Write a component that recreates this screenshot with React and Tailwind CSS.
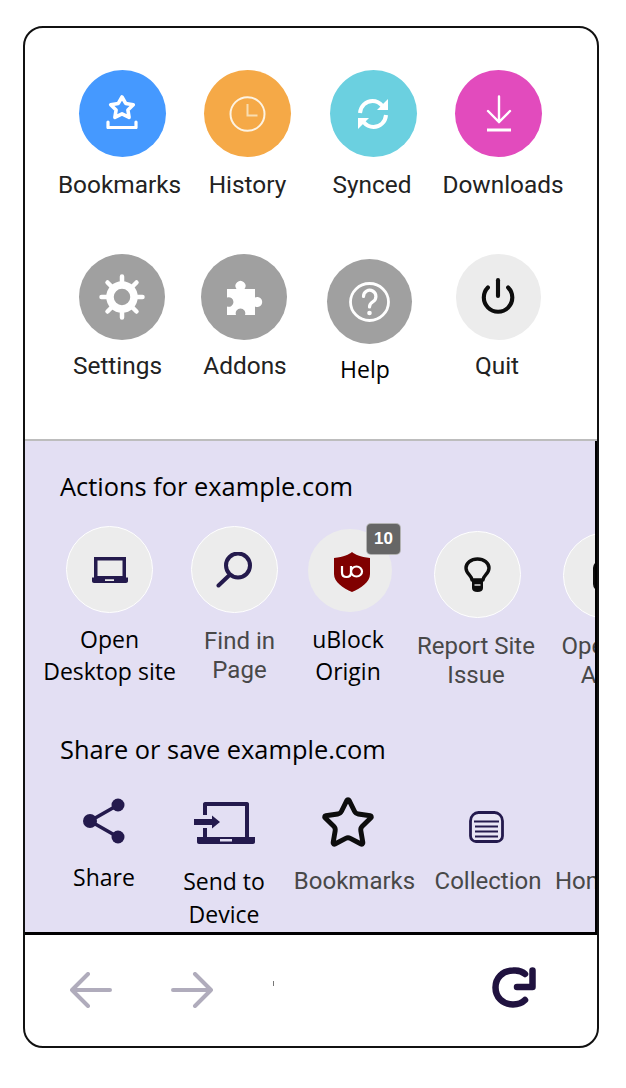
import { Power, Star } from "lucide-react";

const roboto = "font-['Roboto',sans-serif]";
const openSans = "font-['Open_Sans',sans-serif]";

function Circle({ className, children }) {
  return <div className={`flex shrink-0 items-center justify-center rounded-full ${className}`}>{children}</div>;
}

function Item({ width, circle, top = "", label, labelClass, children }) {
  return (
    <div className={`flex shrink-0 flex-col items-center ${width}`}>
      <Circle className={`${circle} ${top}`}>{children}</Circle>
      <div className={`whitespace-pre text-center ${labelClass}`}>{label}</div>
    </div>
  );
}

function BookmarksIcon() {
  return (
    <svg className="mb-[5px]" width="32" height="35" viewBox="0 0 32 35" fill="none" stroke="white" strokeLinejoin="round" strokeLinecap="round">
      <path d="M16 3l3.700 6.400 7.600 1.300-5.400 5.300 1.200 7.400-7.100-3.500-7.100 3.500 1.200-7.400-5.400-5.300 7.600-1.300z" strokeWidth="3.600" />
      <path d="M2 28v5.500h28V28" strokeWidth="3.200" />
    </svg>
  );
}

function ClockIcon() {
  return (
    <svg width="37" height="36" viewBox="0 0 37 36" fill="none" strokeWidth="2">
      <ellipse cx="18.500" cy="18" rx="17" ry="16.800" stroke="#FDF3E2" />
      <path d="M18.500 8v11.500h10" stroke="#F9DDB0" />
    </svg>
  );
}

function SyncIcon() {
  return (
    <svg width="32" height="32" viewBox="0 0 32 32" fill="none" stroke="white" strokeWidth="4">
      <path d="M3 15C3.500 8 9 3 15.500 3c4.500 0 7.500 2 10 5" />
      <path d="M29 17c-.5 7-6 12-12.500 12-4.500 0-7.500-2-10-5" />
      <path d="M31 1v11H20z" fill="white" stroke="none" />
      <path d="M1 31V20h11z" fill="white" stroke="none" />
    </svg>
  );
}

function DownloadIcon() {
  return (
    <svg width="26" height="37" viewBox="0 0 26 37" fill="none" stroke="white" strokeWidth="2.400" strokeLinecap="round">
      <path d="M13 1.500V27M2 16l11 11 11-11" />
      <path d="M1 35h24" strokeWidth="3" strokeLinecap="butt" />
    </svg>
  );
}

function GearIcon() {
  return (
    <svg width="46" height="46" viewBox="0 0 46 46" fill="none" stroke="white" strokeLinecap="round">
      <circle cx="23" cy="23" r="12" strokeWidth="7.500" />
      <path d="M23 2.500V9M23 37v6.500M2.500 23H9M37 23h6.500M8.500 8.500l4 4M33.500 33.500l4 4M37.500 8.500l-4 4M12.500 33.500l-4 4" strokeWidth="4.500" />
    </svg>
  );
}

function PuzzleIcon() {
  return (
    <svg className="ml-[3px]" width="36" height="37" viewBox="0 0 36 37" fill="white">
      <path d="M0 10H9.500A5 5 0 1 1 17.500 10H28V18.500A5 5 0 1 1 28 27.500V36H18A4.800 4.800 0 1 0 9 36H0V27.500A4.800 4.800 0 1 0 0 18.500Z" />
    </svg>
  );
}

function HelpIcon() {
  return (
    <svg width="41" height="40" viewBox="0 0 41 40" fill="none" stroke="white" strokeLinecap="round">
      <ellipse cx="20.500" cy="20" rx="19" ry="18.500" strokeWidth="2.800" />
      <path d="M14.500 14.500a6.200 6.200 0 1 1 9.500 5.200c-2.500 1.600-3.500 2.600-3.500 5.300" strokeWidth="3.200" />
      <circle cx="20.500" cy="31" r="2.300" fill="white" stroke="none" />
    </svg>
  );
}

function LaptopIcon() {
  return (
    <svg width="36" height="26" viewBox="0 0 36 26" fill="#241A4D">
      <path fillRule="evenodd" d="M2 0h32v21H2zM5.500 3.500V19h25V3.500z" />
      <path fillRule="evenodd" d="M0 20.500h36V24c0 1.200-.8 2-2 2H2c-1.200 0-2-.8-2-2zM13 22.200V24h9v-1.800z" />
    </svg>
  );
}

function SearchIcon() {
  return (
    <svg width="37" height="36" viewBox="0 0 37 36" fill="none" stroke="#241A4D" strokeLinecap="round">
      <circle cx="22" cy="13.500" r="12" strokeWidth="4" />
      <path d="M12.500 24L2.500 33.500" strokeWidth="4" />
    </svg>
  );
}

function ShieldIcon() {
  return (
    <svg className="ml-[4px] mt-[3px]" width="36" height="40" viewBox="0 0 36 40" fill="none">
      <path d="M18 0c3 2.500 8 5 18 6v16C36 30 27 36 18 40 9 36 0 30 0 22V6c10-1 15-3.500 18-6z" fill="#800000" />
      <path d="M8 14v6.500c0 3 1.800 4.500 4.500 4.500s4.500-1.500 4.500-4.500V14" stroke="white" strokeWidth="2.200" />
      <ellipse cx="22.500" cy="19.500" rx="5.500" ry="5" stroke="white" strokeWidth="2.200" />
    </svg>
  );
}

function BulbIcon() {
  return (
    <svg width="27" height="35" viewBox="0 0 27 35" fill="none" stroke="#0D0D0D">
      <path d="M8 23c0-4.500-6-6-6-12C2 6 7 2 13.500 2S25 6 25 11c0 6-6 7.500-6 12z" strokeWidth="3.400" strokeLinejoin="round" />
      <path d="M8 23h11v8c0 2.500-2 4-5.500 4S8 33.500 8 31z" fill="#0D0D0D" stroke="none" />
      <path d="M10.500 28h6" stroke="#ECECEC" strokeWidth="1.400" />
    </svg>
  );
}

function ShareIcon() {
  return (
    <svg width="42" height="46" viewBox="0 0 42 46" fill="#241A4D" stroke="#241A4D">
      <path d="M35 7L7 23l28 16" fill="none" strokeWidth="3.600" />
      <circle cx="35" cy="7" r="6.500" stroke="none" />
      <circle cx="7" cy="23" r="7" stroke="none" />
      <circle cx="35" cy="39" r="6.500" stroke="none" />
    </svg>
  );
}

function SendIcon() {
  return (
    <svg width="61" height="42" viewBox="0 0 61 42" fill="#241A4D">
      <path d="M11 0h42c1.500 0 2 1 2 2v34h-4V4H13v9H9V2c0-1 .8-2 2-2zM9 26h4v10H9z" />
      <path d="M3 35h58v5c0 1.200-.8 2-2 2H5c-1.200 0-2-.8-2-2zM26 37v2.400h12V37z" fillRule="evenodd" />
      <path d="M0 17h18v-3.500l8 6.500-8 6.500V23H0z" />
    </svg>
  );
}

function CollectionIcon() {
  return (
    <svg width="35" height="32" viewBox="0 0 35 32" fill="none" stroke="#241A4D">
      <path d="M1.500 10c0-5 4-8.500 8-8.500h16c4 0 8 3.500 8 8.500v15c0 3-2.500 5.500-5.500 5.500H7c-3 0-5.500-2.500-5.500-5.500z" strokeWidth="2.800" fill="#E8E5F4" />
      <path d="M5 10.500h25M6 15.500h23M6 20.500h23M6 25.500h23" strokeWidth="2" />
    </svg>
  );
}

function ReloadIcon() {
  return (
    <svg width="44" height="41" viewBox="0 0 44 41" fill="none" stroke="#20123F" strokeWidth="6.500" strokeLinecap="round">
      <path d="M33 7C30 4 26 3 21 3.500 10.500 3.500 3.500 11 3.500 20.500S10.500 37.500 21 37.500c5 0 9-1.500 12-4.500" />
      <path d="M40.500 3.500V20H25" strokeLinejoin="round" />
    </svg>
  );
}

function BackIcon() {
  return (
    <svg width="42" height="36" viewBox="0 0 42 36" fill="none" stroke="#B0ACBC" strokeWidth="4" strokeLinecap="round" strokeLinejoin="round">
      <path d="M40 18H2M18 2L2 18l16 16" />
    </svg>
  );
}

function ForwardIcon() {
  return (
    <svg width="42" height="36" viewBox="0 0 42 36" fill="none" stroke="#B0ACBC" strokeWidth="4" strokeLinecap="round" strokeLinejoin="round">
      <path d="M2 18h38M24 2l16 16-16 16" />
    </svg>
  );
}

export default function App() {
  const gray = "h-[86px] w-[86px] bg-[#A0A0A0]";
  const light = "h-[87px] w-[87px] bg-[#ECECEC] border border-white";
  const topText = `text-[24.400px] leading-[28px] text-[#222] ${roboto}`;
  const openText = `text-[23px] leading-[32px] text-black ${openSans}`;
  const grayText = `text-[24px] leading-[29px] text-[#484848] ${roboto}`;
  const bottomText = `text-[24px] leading-[28px] text-[#484848] ${roboto}`;
  const heading = `pl-[18px] text-[25.400px] leading-[32px] text-black ${openSans}`;

  return (
    <div className="h-[1088px] w-[626px] bg-white pl-[23px] pt-[26px]">
      <div className="flex h-[1022px] w-[576px] flex-col overflow-hidden rounded-[20px] border-2 border-[#111]">
        <div className="h-[413px] shrink-0 border-b-2 border-[#BDBDBD] pl-[34px] pt-[42px]">
          <div className="flex">
            <Item width="w-[126px]" circle="h-[87px] w-[87px] bg-[#4599FF]" label="Bookmarks" labelClass={`mr-[5px] mt-[14px] ${topText}`}><BookmarksIcon /></Item>
            <Item width="w-[125px]" circle="h-[87px] w-[87px] bg-[#F5A947]" label="History" labelClass={`mt-[14px] ${topText}`}><ClockIcon /></Item>
            <Item width="w-[126px]" circle="h-[87px] w-[87px] bg-[#6BD0E0]" label="Synced" labelClass={`mr-[2px] mt-[14px] ${topText}`}><SyncIcon /></Item>
            <Item width="w-[125px]" circle="h-[87px] w-[87px] bg-[#E24BBD]" label="Downloads" labelClass={`ml-[9px] mt-[14px] ${topText}`}><DownloadIcon /></Item>
          </div>
          <div className="mt-[55px] flex pl-px">
            <Item width="w-[124px]" circle={gray} label="Settings" labelClass={`mr-[9px] mt-[12px] ${topText}`}><GearIcon /></Item>
            <Item width="w-[119px]" circle={gray} label="Addons" labelClass={`ml-[3px] mt-[12px] ${topText}`}><PuzzleIcon /></Item>
            <Item width="w-[132px]" circle="h-[85px] w-[85px] bg-[#A0A0A0]" top="mt-[5px]" label="Help" labelClass={`mr-[8px] mt-[10px] text-[23px] leading-[30px] text-black ${openSans}`}><HelpIcon /></Item>
            <Item width="w-[126px]" circle="h-[86px] w-[85px] bg-[#ECECEC]" label="Quit" labelClass={`mr-[2px] mt-[12px] ${topText}`}><Power className="mb-[3px]" size={38} color="#0D0D0D" strokeWidth={2.600} /></Item>
          </div>
        </div>

        <div className="h-[494px] shrink-0 overflow-hidden border-b-[3px] border-r-2 border-b-black border-r-black bg-[#E3DFF3] pl-[17px] pt-[29px]">
          <div className={heading}>Actions for example.com</div>
          <div className="mt-[24px] flex h-[165px] w-[700px]">
            <Item width="w-[135px]" circle={light} label={"Open\nDesktop site"} labelClass={`mt-[10px] ${openText}`}><LaptopIcon /></Item>
            <Item width="w-[115px]" circle={light} label={"Find in\nPage"} labelClass={`ml-[10px] mt-[14px] ${grayText}`}><SearchIcon /></Item>
            <div className="relative flex w-[116px] shrink-0 flex-col items-center">
              <Circle className="mt-[3px] h-[83px] w-[84px] bg-[#ECECEC]"><ShieldIcon /></Circle>
              <div className={`mr-[4px] mt-[11px] whitespace-pre text-center ${openText}`}>{"uBlock\nOrigin"}</div>
              <div className="absolute left-[74px] top-[-3px] flex h-[32px] w-[35px] items-center justify-center rounded-[5px] border border-white/50 bg-[#666] font-['Liberation_Sans',sans-serif] text-[17px] font-bold text-white">10</div>
            </div>
            <Item width="w-[139px]" circle={light} top="mt-[5px]" label={"Report Site\nIssue"} labelClass={`mr-[3px] mt-[14px] ${grayText}`}><BulbIcon /></Item>
            <Item width="w-[118px]" circle={light} top="mt-[6px]" label={"Open in\nApp"} labelClass={`mr-[8px] mt-[13px] ${grayText}`}>
              <div className="h-[30px] w-[26px] rounded-[7px] bg-[#0D0D0D]" />
            </Item>
          </div>
          <div className={`mt-[42px] ${heading}`}>Share or save example.com</div>
          <div className="mt-[30px] flex w-[700px] items-start">
            <div className="flex w-[124px] shrink-0 flex-col items-center">
              <div className="mt-[3px]"><ShareIcon /></div>
              <div className={`mt-[17px] ${openText}`}>Share</div>
            </div>
            <div className="flex w-[116px] shrink-0 flex-col items-center">
              <div className="mt-[7px]"><SendIcon /></div>
              <div className={`mt-[21px] whitespace-pre text-center text-[23px] leading-[33px] text-black ${openSans}`}>{"Send to\nDevice"}</div>
            </div>
            <div className="flex w-[135px] shrink-0 flex-col items-center">
              <Star className="mr-[3px]" size={56} color="#0D0D0D" strokeWidth={2.100} />
              <div className={`ml-[10px] mt-[16px] ${bottomText}`}>Bookmarks</div>
            </div>
            <div className="flex w-[138px] shrink-0 flex-col items-center">
              <div className="mt-[16px]"><CollectionIcon /></div>
              <div className={`ml-[4px] mt-[24px] ${bottomText}`}>Collection</div>
            </div>
            <div className={`mt-[72px] ${bottomText}`}>Home</div>
          </div>
        </div>

        <div className="flex flex-1 items-start pl-[45px] pt-[37px]">
          <BackIcon />
          <div className="ml-[59px]"><ForwardIcon /></div>
          <div className="ml-[60px] mt-[9px] h-[5px] w-px bg-[#777]" />
          <div className="ml-[218px] mt-[-5px]"><ReloadIcon /></div>
        </div>
      </div>
    </div>
  );
}
